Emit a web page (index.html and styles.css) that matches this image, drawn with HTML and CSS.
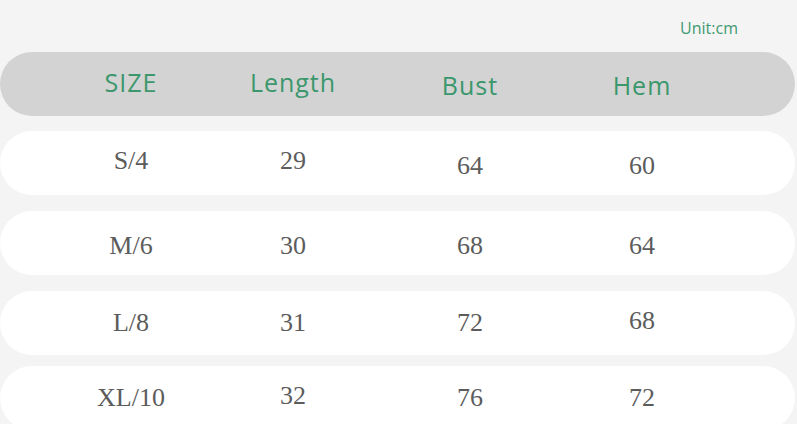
FILE: index.html
```html
<!DOCTYPE html>
<html>
<head>
<meta charset="utf-8">
<link rel="stylesheet" href="styles.css">
</head>
<body>
<div class="page">
  <div class="unit">Unit:cm</div>
  <div class="table">
    <div class="row head">
      <div class="c c1">SIZE</div>
      <div class="c c2">Length</div>
      <div class="c c3 dn">Bust</div>
      <div class="c c4 dn">Hem</div>
    </div>
    <div class="row">
      <div class="c c1 up">S/4</div>
      <div class="c c2 up">29</div>
      <div class="c c3 dn">64</div>
      <div class="c c4 dn">60</div>
    </div>
    <div class="row">
      <div class="c c1 dn">M/6</div>
      <div class="c c2 dn">30</div>
      <div class="c c3 dn">68</div>
      <div class="c c4 dn">64</div>
    </div>
    <div class="row">
      <div class="c c1">L/8</div>
      <div class="c c2">31</div>
      <div class="c c3">72</div>
      <div class="c c4 up">68</div>
    </div>
    <div class="row last">
      <div class="c c1">XL/10</div>
      <div class="c c2 up">32</div>
      <div class="c c3">76</div>
      <div class="c c4">72</div>
    </div>
  </div>
</div>
</body>
</html>
```
FILE: styles.css
```css
html, body {
  margin: 0;
  padding: 0;
  background: #f4f4f4;
  overflow: hidden;
}
.page {
  width: 797px;
  height: 424px;
  overflow: hidden;
}
.unit {
  height: 52px;
  box-sizing: border-box;
  padding: 17px 59px 0 0;
  text-align: right;
  font-family: "Open Sans", sans-serif;
  font-size: 16px;
  color: #3f9a72;
  line-height: 22px;
}
.table {
  display: flex;
  flex-direction: column;
  gap: 16px;
  width: 795px;
}
.row {
  height: 64px;
  box-sizing: border-box;
  border-radius: 32px;
  background: #ffffff;
  display: grid;
  grid-template-columns: 162px 162px 192px 152px;
  padding-left: 50px;
  align-items: center;
  font-family: "Liberation Serif", serif;
  font-size: 26px;
  color: #5c5c5c;
}
.row.head {
  background: #d3d3d3;
  font-family: "Open Sans", sans-serif;
  font-size: 25px;
  letter-spacing: 1px;
  color: #3b976c;
  margin-bottom: -1px;
  padding-bottom: 4px;
}
.row.last {
  margin-top: -5px;
}
.c {
  text-align: center;
}
.c.up {
  padding-bottom: 5px;
}
.c.dn {
  padding-top: 6px;
}
```
